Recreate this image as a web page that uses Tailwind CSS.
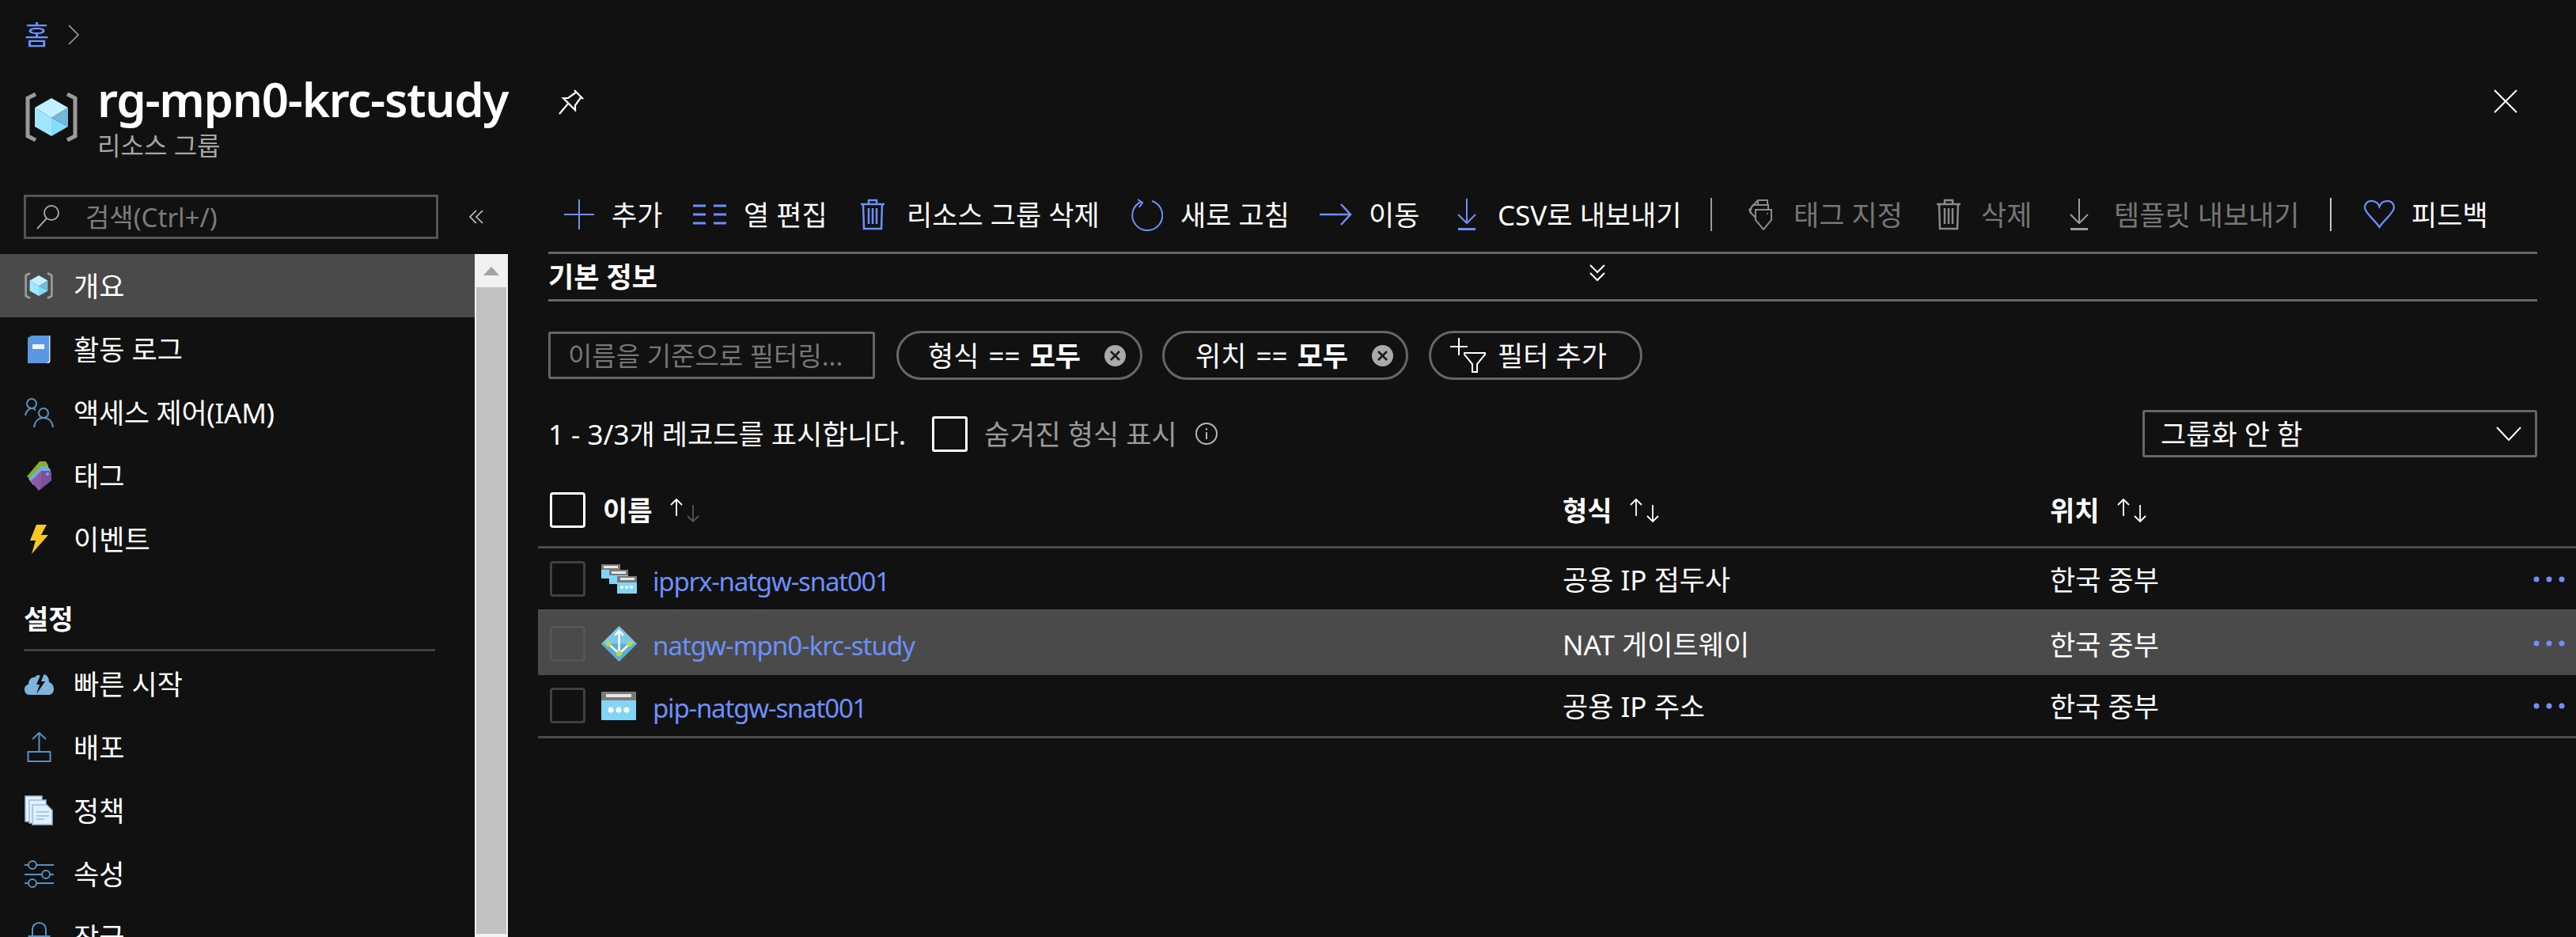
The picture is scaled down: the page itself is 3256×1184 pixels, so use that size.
<!DOCTYPE html>
<html lang="ko">
<head>
  <meta charset="UTF-8" />
  <title>rg-mpn0-krc-study</title>
  <script src="https://cdn.jsdelivr.net/npm/@tailwindcss/browser@4"></script>
</head>
<body class="bg-[#111111] text-white w-[3256px] h-[1184px] overflow-hidden font-['Noto_Sans','Noto_Sans_CJK_KR',sans-serif] text-[35px] leading-none">
  <svg class="hidden">
    <symbol id="rg" viewBox="0 0 66 62">
      <path d="M13 2 L3 7 V55 L13 60 M53 2 L63 7 V55 L53 60" fill="none" stroke="#9a9a9a" stroke-width="5"/>
      <path d="M33 7 L54 19 L33 32 L12 19Z" fill="#c3f0ff"/>
      <path d="M54 19 V43 L33 32Z" fill="#74b8dc"/>
      <path d="M54 43 L33 55 V32Z" fill="#86dcfb"/>
      <path d="M12 19 L33 32 V55 L12 43Z" fill="#9fe7ff"/>
    </symbol>
    <symbol id="trash" viewBox="0 0 32 40">
      <path d="M1 7 H31 M11 7 V2 H21 V7 M4 7 L5 38 H27 L28 7 M11 12 V32 M16 12 V32 M21 12 V32" fill="none" stroke="currentColor" stroke-width="2.5"/>
    </symbol>
    <symbol id="down" viewBox="0 0 26 40">
      <path d="M13 0 V31 M2 20 L13 31 L24 20" fill="none" stroke="currentColor" stroke-width="2"/>
      <path d="M2 38.5 H24" stroke="currentColor" stroke-width="3"/>
    </symbol>
    <symbol id="clear" viewBox="0 0 27 27">
      <circle cx="13.500" cy="13.500" r="13.500" fill="#a9a9a9"/>
      <path d="M8 8 L19 19 M19 8 L8 19" stroke="#1a1a1a" stroke-width="2.500"/>
    </symbol>
    <symbol id="sort" viewBox="0 0 42 30">
      <path d="M10 22 V1 M3 8 L10 1 L17 8" fill="none" stroke="#ffffff" stroke-width="1.800"/>
      <path d="M31 8 V29 M24 22 L31 29 L38 22" fill="none" stroke="currentColor" stroke-width="1.800"/>
    </symbol>
    <symbol id="pip" viewBox="0 0 44 36">
      <rect width="44" height="36" rx="1" fill="#83d4f5"/>
      <rect width="44" height="11" fill="#7a7a7a"/>
      <rect x="6" y="3" width="32" height="4" fill="#e8e8e8"/>
      <circle cx="12" cy="23" r="3.500" fill="#fff"/><circle cx="22" cy="23" r="3.500" fill="#fff"/><circle cx="32" cy="23" r="3.500" fill="#fff"/>
    </symbol>
    <symbol id="dots" viewBox="0 0 40 8">
      <circle cx="4" cy="4" r="3.500" fill="#6d8ff7"/><circle cx="20" cy="4" r="3.500" fill="#6d8ff7"/><circle cx="36" cy="4" r="3.500" fill="#6d8ff7"/>
    </symbol>
  </svg>

  <!-- page header -->
  <header class="h-[225px] relative">
    <div class="flex items-center h-[88px] pl-[31px] gap-[24px] text-[34px] text-[#6f94ff]">
      <span>홈</span>
      <svg class="w-[14px] h-[26px]" viewBox="0 0 14 26"><path d="M1 1 L13 13 L1 25" fill="none" stroke="#a8a8a8" stroke-width="1.500"/></svg>
    </div>
    <div class="flex items-start pt-[1px] pl-[32px]">
      <svg class="w-[66px] h-[62px] mt-[28px]"><use href="#rg"/></svg>
      <div class="ml-[25px]">
        <h1 class="text-[60px] leading-[72px] font-semibold tracking-[-1.300px] text-white">rg-mpn0-krc-study</h1>
        <div class="text-[32px] leading-[38px] mt-[4px] text-[#a6a6a6]">리소스 그룹</div>
      </div>
      <svg class="w-[36px] h-[36px] ml-[62px] mt-[22px]" viewBox="0 0 36 36"><path d="M22 3 L33 14 M25 5 L14 13 L8 13 L23 28 L23 22 L31 11 M14 20 L3 33" fill="none" stroke="#fff" stroke-width="2.200"/></svg>
    </div>
    <svg class="absolute left-[3152px] top-[113px] w-[30px] h-[30px]" viewBox="0 0 30 30"><path d="M1 1 L29 29 M29 1 L1 29" stroke="#fff" stroke-width="2"/></svg>
  </header>

  <div class="flex h-[959px]">
    <!-- sidebar -->
    <aside class="w-[642px] shrink-0 flex flex-col">
      <div class="flex items-center h-[96px] pl-[30px] pb-[19px] pt-[21px]">
        <div class="w-[524px] h-[56px] border-[3px] border-[#555555] flex items-center pl-[13px] text-[33px] text-[#7c7c7c]">
          <svg class="w-[30px] h-[32px]" viewBox="0 0 30 32"><circle cx="19" cy="11" r="9" fill="none" stroke="#a0a0a0" stroke-width="2"/><path d="M13 18 L1 31" stroke="#a0a0a0" stroke-width="2"/></svg>
          <span class="ml-[32px]">검색(Ctrl+/)</span>
        </div>
        <svg class="w-[20px] h-[18px] ml-[38px]" viewBox="0 0 20 18"><path d="M10 1 L2 9 L10 17 M18 1 L10 9 L18 17" fill="none" stroke="#c8c8c8" stroke-width="1.600"/></svg>
      </div>
      <div class="flex h-[863px] overflow-hidden">
        <nav class="w-[600px] shrink-0">
          <a class="flex items-center h-[80px] pl-[30px] bg-[#4a4a4a]"><span class="w-[38px] flex justify-center"><svg class="w-[36px] h-[34px]"><use href="#rg"/></svg></span><span class="ml-[25px]">개요</span></a>
          <a class="flex items-center h-[80px] pl-[30px]"><span class="w-[38px] flex justify-center">
            <svg class="w-[29px] h-[36px]" viewBox="0 0 29 36"><path d="M0 4 L5 1 H28 V35 L27 36 H0Z" fill="#5b97e3"/><path d="M27 1 H28.500 V34 L26 36 H24 L27 33Z" fill="#dcecff"/><rect x="6" y="12" width="15" height="6" fill="#f2f2f2"/></svg>
          </span><span class="ml-[25px]">활동 로그</span></a>
          <a class="flex items-center h-[80px] pl-[30px]"><span class="w-[38px] flex justify-center">
            <svg class="w-[37px] h-[37px]" viewBox="0 0 37 37" fill="none" stroke="#5c92c2" stroke-width="2"><circle cx="9" cy="7" r="6"/><path d="M1 22 C2 16 6 13 9 13 C11 13 13 14 14 15"/><circle cx="24" cy="19" r="6"/><path d="M12 37 C13 29 18 25 24 25 C30 25 35 29 36 37"/></svg>
          </span><span class="ml-[25px] tracking-[-0.300px]">액세스 제어(IAM)</span></a>
          <a class="flex items-center h-[80px] pl-[30px]"><span class="w-[38px] flex justify-center">
            <svg class="w-[31px] h-[37px]" viewBox="0 0 31 37"><path d="M0 19 L16 0 H24 L27 5 L27 15 L6 24Z" fill="#86ad2e"/><path d="M2 22 L18 6 H26 L30 11 V20 L8 30Z" fill="#75a9d8"/><path d="M5 25 L18 12 H28 L31 15 V24 L15 37Z" fill="#8a5aa8"/><path d="M18 12 H28 L31 15 V24 L15 37 L18 30Z" fill="#7d4f9c"/><circle cx="26" cy="16" r="2" fill="#75a9d8"/></svg>
          </span><span class="ml-[25px]">태그</span></a>
          <a class="flex items-center h-[80px] pl-[30px]"><span class="w-[38px] flex justify-center">
            <svg class="w-[23px] h-[37px]" viewBox="0 0 23 37"><path d="M8 0 H21 L14 13 H23 L2 37 L7 20 H0Z" fill="#f5c825"/></svg>
          </span><span class="ml-[25px]">이벤트</span></a>
          <div class="pl-[30px] pt-[43px] text-[34px] font-bold leading-[36px]">설정</div>
          <div class="ml-[30px] mt-[20px] w-[520px] h-[3px] bg-[#404040]"></div>
          <a class="flex items-center h-[80px] mt-[1px] pl-[30px]"><span class="w-[38px] flex justify-center">
            <svg class="w-[37px] h-[27px]" viewBox="0 0 37 27"><path d="M6 27 C2 27 0 24 0 20 C0 16 3 14 5 14 C5 8 9 4 13 5 C15 2 18 1 20 3 L25 1 C30 3 31 7 31 11 C35 12 37 16 37 20 C37 24 34 27 31 27Z" fill="#7fb4dc"/><path d="M21 0 L15 14 H19 L15 26 L26 10 H21 L25 0Z" fill="#111111"/></svg>
          </span><span class="ml-[25px]">빠른 시작</span></a>
          <a class="flex items-center h-[80px] pl-[30px]"><span class="w-[38px] flex justify-center">
            <svg class="w-[31px] h-[38px]" viewBox="0 0 31 38" fill="none" stroke="#5a8fbf" stroke-width="2"><path d="M15.500 0 V24 M7 9 L15.500 1 L24 9"/><rect x="1.500" y="25" width="28" height="12"/></svg>
          </span><span class="ml-[25px]">배포</span></a>
          <a class="flex items-center h-[80px] pl-[30px]"><span class="w-[38px] flex justify-center">
            <svg class="w-[36px] h-[38px]" viewBox="0 0 36 38"><path d="M1 1 H22 V33 H1Z" fill="#e8f1fa" stroke="#8cbfe6" stroke-width="1.500"/><path d="M6 6 H27 V35 H6Z" fill="#e8f1fa" stroke="#8cbfe6" stroke-width="1.500"/><path d="M10 12 H28 L35 19 V37 H10Z" fill="#e3eef8" stroke="#8cbfe6" stroke-width="1.500"/><path d="M15 21 H31 M15 26 H31 M15 30 H25" stroke="#8cbfe6" stroke-width="1.500"/></svg>
          </span><span class="ml-[25px]">정책</span></a>
          <a class="flex items-center h-[80px] pl-[30px]"><span class="w-[38px] flex justify-center">
            <svg class="w-[37px] h-[35px]" viewBox="0 0 37 35" fill="none" stroke="#5a8fbf" stroke-width="2"><path d="M0 6 H5 M15 6 H37 M0 18 H22 M32 18 H37 M0 29 H5 M15 29 H37"/><circle cx="10" cy="6" r="5"/><circle cx="27" cy="18" r="5"/><circle cx="10" cy="29" r="5"/></svg>
          </span><span class="ml-[25px]">속성</span></a>
          <a class="flex items-center h-[80px] pl-[30px]"><span class="w-[38px] flex justify-center">
            <svg class="w-[29px] h-[38px]" viewBox="0 0 29 38" fill="none" stroke="#5a8fbf" stroke-width="2"><path d="M6 18 V10 C6 4 10 1 14.500 1 C19 1 23 4 23 10 V18"/><rect x="1.500" y="18" width="26" height="18"/></svg>
          </span><span class="ml-[25px]">잠금</span></a>
        </nav>
        <!-- scrollbar -->
        <div class="w-[42px] shrink-0 bg-[#f1f1f1] flex flex-col items-center">
          <div class="h-[42px] flex items-center justify-center"><div class="w-0 h-0 border-x-[10px] border-x-transparent border-b-[11px] border-b-[#a3a3a3]"></div></div>
          <div class="w-[38px] h-[817px] bg-[#c1c1c1]"></div>
        </div>
      </div>
    </aside>

    <!-- main blade -->
    <main class="flex-1 pl-[38px] min-w-0">
      <div class="ml-[13px] w-[2514px]">
        <div class="flex items-center h-[96px] border-b-[3px] border-[#666666] pb-[1px]">
          <button class="flex items-center w-[183px] pl-[20px] shrink-0"><svg class="w-[38px] h-[38px]" viewBox="0 0 38 38"><path d="M19 0 V38 M0 19 H38" stroke="#6d8ff7" stroke-width="2"/></svg><span class="ml-[22px]">추가</span></button>
          <button class="flex items-center w-[211px] shrink-0"><svg class="w-[42px] h-[26px]" viewBox="0 0 42 26"><path d="M0 2 H16 M26 2 H42 M0 13 H16 M26 13 H42 M0 24 H16 M26 24 H42" stroke="#6d8ff7" stroke-width="3"/></svg><span class="ml-[22px]">열 편집</span></button>
          <button class="flex items-center w-[342px] shrink-0 text-[#6d8ff7]"><svg class="w-[32px] h-[40px]"><use href="#trash"/></svg><span class="ml-[27px] text-white">리소스 그룹 삭제</span></button>
          <button class="flex items-center w-[239px] shrink-0"><svg class="w-[41px] h-[41px]" viewBox="0 0 41 41"><path d="M13 4 A19 19 0 1 0 27 3" fill="none" stroke="#6d8ff7" stroke-width="2"/><path d="M9 1 L15 5 L11 11" fill="none" stroke="#6d8ff7" stroke-width="2"/></svg><span class="ml-[22px]">새로 고침</span></button>
          <button class="flex items-center w-[173px] shrink-0"><svg class="w-[41px] h-[28px]" viewBox="0 0 41 28"><path d="M0 14 H39 M27 1 L39 14 L27 27" fill="none" stroke="#6d8ff7" stroke-width="2.500"/></svg><span class="ml-[21px]">이동</span></button>
          <button class="flex items-center shrink-0 text-[#6d8ff7] w-[321px]"><svg class="w-[26px] h-[40px]"><use href="#down"/></svg><span class="ml-[26px] text-white">CSV로 내보내기</span></button>
          <div class="w-[2px] h-[42px] bg-[#9a9a9a] shrink-0"></div>
          <button class="flex items-center w-[238px] ml-[45px] shrink-0 text-[#767676]"><svg class="w-[32px] h-[40px]" viewBox="0 0 32 40" fill="none" stroke="#8a8a8a" stroke-width="2"><path d="M13 8 V2 H25 V8 M6 8 H26 V14 M13 2 L2 14 L6 20 M6 8 L3 17 L10 24 M10 14 H30 V27 L20 39 L10 27Z"/><circle cx="25" cy="19" r="1" fill="#8a8a8a" stroke="none"/></svg><span class="ml-[26px]">태그 지정</span></button>
          <button class="flex items-center w-[168px] shrink-0 text-[#8a8a8a]"><svg class="w-[32px] h-[40px]"><use href="#trash"/></svg><span class="ml-[25px] text-[#767676]">삭제</span></button>
          <button class="flex items-center w-[330px] shrink-0 text-[#9a9a9a]"><svg class="w-[26px] h-[40px]"><use href="#down"/></svg><span class="ml-[31px] text-[#767676]">템플릿 내보내기</span></button>
          <div class="w-[2px] h-[42px] bg-[#c8c8c8] shrink-0"></div>
          <button class="flex items-center ml-[40px] shrink-0"><svg class="w-[41px] h-[36px]" viewBox="0 0 41 36"><path d="M20.500 34 C14 24 2 16 2 9 C2 4 6 1 10 1 C15 1 19 4 20.500 8 C22 4 26 1 31 1 C35 1 39 4 39 9 C39 16 27 24 20.500 34Z" fill="none" stroke="#6d8ff7" stroke-width="2.200"/></svg><span class="ml-[20px]">피드백</span></button>
        </div>
        <div class="flex items-center h-[60px] border-b-[3px] border-[#666666] relative pb-[1px]">
          <span class="font-bold">기본 정보</span>
          <svg class="absolute left-[1316px] top-[13px] w-[20px] h-[22px]" viewBox="0 0 20 22"><path d="M1 1 L10 10 L19 1 M1 11 L10 20 L19 11" fill="none" stroke="#fff" stroke-width="2"/></svg>
        </div>
        <!-- filters -->
        <div class="flex items-center mt-[37px] h-[62px]">
          <div class="w-[413px] h-[60px] border-[3px] border-[#666666] rounded-[3px] flex items-center pl-[22px] text-[33px] text-[#767676] whitespace-nowrap">이름을 기준으로 필터링...</div>
          <div class="w-[311px] h-[62px] ml-[27px] border-[3px] border-[#666666] rounded-full flex items-center pl-[37px]">
            <span class="whitespace-nowrap [word-spacing:3px]">형식 == <b class="font-bold">모두</b></span><svg class="w-[27px] h-[27px] ml-auto mr-[18px]"><use href="#clear"/></svg>
          </div>
          <div class="w-[311px] h-[62px] ml-[25px] border-[3px] border-[#666666] rounded-full flex items-center pl-[39px]">
            <span class="whitespace-nowrap [word-spacing:3px]">위치 == <b class="font-bold">모두</b></span><svg class="w-[27px] h-[27px] ml-auto mr-[16px]"><use href="#clear"/></svg>
          </div>
          <div class="w-[270px] h-[62px] ml-[26px] border-[3px] border-[#666666] rounded-full flex items-center pl-[24px]">
            <svg class="w-[45px] h-[44px]" viewBox="0 0 45 44" fill="none" stroke="#fff" stroke-width="2"><path d="M11 0 V22 M0 11 H22 M18 19 H44 V21 L34 33 V43 H28 V33 L18 21Z"/></svg>
            <span class="ml-[15px] whitespace-nowrap">필터 추가</span>
          </div>
        </div>
        <!-- records row -->
        <div class="flex items-center h-[60px] mt-[38px]">
          <span class="w-[485px] shrink-0 whitespace-nowrap">1 - 3/3개 레코드를 표시합니다.</span>
          <span class="w-[45px] h-[45px] shrink-0 border-[3px] border-white rounded-[3px]"></span>
          <span class="ml-[21px] whitespace-nowrap text-[#9a9a9a]">숨겨진 형식 표시</span>
          <svg class="ml-[22px] w-[30px] h-[30px]" viewBox="0 0 30 30" fill="none" stroke="#b5b5b5" stroke-width="2"><circle cx="15" cy="15" r="13"/><path d="M15 13 V22 M15 8 V10.500"/></svg>
          <div class="ml-auto w-[499px] h-[60px] border-[3px] border-[#666666] rounded-[3px] flex items-center pl-[20px] pr-[17px]">
            <span>그룹화 안 함</span>
            <svg class="ml-auto w-[32px] h-[18px]" viewBox="0 0 32 18"><path d="M1 1 L16 17 L31 1" fill="none" stroke="#fff" stroke-width="2"/></svg>
          </div>
        </div>
      </div>

      <!-- resource table -->
      <div class="mt-[25px]">
        <div class="grid grid-cols-[1295px_616px_1fr] items-center h-[90px] border-b-[3px] border-[#4a4a4a] font-bold text-[34px] pb-[4px]">
          <div class="flex items-center pl-[15px]">
            <span class="w-[45px] h-[45px] border-[3px] border-white rounded-[4px]"></span>
            <span class="ml-[22px]">이름</span>
            <svg class="w-[42px] h-[30px] ml-[20px] text-[#555555]"><use href="#sort"/></svg>
          </div>
          <div class="flex items-center">형식<svg class="w-[42px] h-[30px] ml-[20px] text-white"><use href="#sort"/></svg></div>
          <div class="flex items-center">위치<svg class="w-[42px] h-[30px] ml-[20px] text-white"><use href="#sort"/></svg></div>
        </div>
        <div class="grid grid-cols-[1295px_616px_1fr] items-center h-[80px] border-b-[3px] border-[#4f4f4f]">
          <div class="flex items-center pl-[15px]">
            <span class="w-[45px] h-[45px] border-[3px] border-[#404040] rounded-[4px] shrink-0"></span>
            <svg class="w-[45px] h-[37px] ml-[20px]" viewBox="0 0 45 37">
              <rect width="24" height="18" fill="#83d4f5"/><rect width="24" height="7" fill="#7a7a7a"/><rect x="3" y="2" width="18" height="3" fill="#e8e8e8"/>
              <rect x="10" y="7" width="24" height="18" fill="#83d4f5"/><rect x="10" y="7" width="24" height="7" fill="#7a7a7a"/><rect x="13" y="9" width="18" height="3" fill="#e8e8e8"/>
              <rect x="20" y="15" width="25" height="22" fill="#83d4f5"/><rect x="20" y="15" width="25" height="8" fill="#7a7a7a"/><rect x="24" y="17" width="18" height="3" fill="#e8e8e8"/>
              <circle cx="26" cy="29" r="2" fill="#fff"/><circle cx="32" cy="29" r="2" fill="#fff"/><circle cx="38" cy="29" r="2" fill="#fff"/>
            </svg>
            <a class="ml-[20px] pt-[5px] text-[33px] tracking-[-1.200px] text-[#6d8ff7] whitespace-nowrap">ipprx-natgw-snat001</a>
          </div>
          <div class="pt-[2px]">공용 IP 접두사</div>
          <div class="flex items-center"><span class="pt-[2px]">한국 중부</span><svg class="w-[40px] h-[8px] ml-auto mr-[14px]"><use href="#dots"/></svg></div>
        </div>
        <div class="grid grid-cols-[1295px_616px_1fr] items-center h-[80px] bg-[#4a4a4a]">
          <div class="flex items-center pl-[15px]">
            <span class="w-[45px] h-[45px] border-[3px] border-[#555555] rounded-[4px] shrink-0"></span>
            <svg class="w-[45px] h-[45px] ml-[20px]" viewBox="0 0 45 45">
              <path d="M22.500 0 L45 22.500 L22.500 45 L0 22.500Z" fill="#7cc8ec"/><path d="M22.500 45 L45 22.500 H0Z" fill="#5aaed6"/>
              <path d="M22.500 37 V7 M17 12 L22.500 6 L28 12 M9 22.500 L22.500 35 M36 22.500 L22.500 35" fill="none" stroke="#fff" stroke-width="2.500"/>
              <circle cx="9" cy="22.500" r="3.500" fill="#b6d94c"/><circle cx="36" cy="22.500" r="3.500" fill="#b6d94c"/><circle cx="22.500" cy="35" r="3.500" fill="#b6d94c"/>
            </svg>
            <a class="ml-[20px] pt-[5px] text-[33px] tracking-[-1px] text-[#6d8ff7] whitespace-nowrap">natgw-mpn0-krc-study</a>
          </div>
          <div class="pt-[2px]">NAT 게이트웨이</div>
          <div class="flex items-center"><span class="pt-[2px]">한국 중부</span><svg class="w-[40px] h-[8px] ml-auto mr-[14px]"><use href="#dots"/></svg></div>
        </div>
        <div class="grid grid-cols-[1295px_616px_1fr] items-center h-[80px] border-b-[3px] border-[#4a4a4a]">
          <div class="flex items-center pl-[15px]">
            <span class="w-[45px] h-[45px] border-[3px] border-[#404040] rounded-[4px] shrink-0"></span>
            <svg class="w-[44px] h-[36px] ml-[20px]"><use href="#pip"/></svg>
            <a class="ml-[21px] pt-[5px] text-[33px] tracking-[-1.200px] text-[#6d8ff7] whitespace-nowrap">pip-natgw-snat001</a>
          </div>
          <div class="pt-[2px]">공용 IP 주소</div>
          <div class="flex items-center"><span class="pt-[2px]">한국 중부</span><svg class="w-[40px] h-[8px] ml-auto mr-[14px]"><use href="#dots"/></svg></div>
        </div>
      </div>
    </main>
  </div>
</body>
</html>
